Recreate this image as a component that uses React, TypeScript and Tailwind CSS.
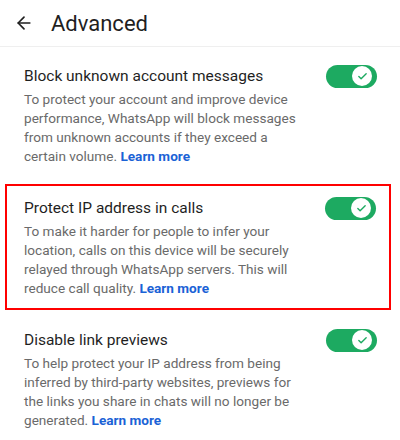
import { ArrowLeft, Check } from "lucide-react";
import type { ReactNode } from "react";

function Toggle() {
  return (
    <div className="w-[51px] h-[23px] mt-[0.5px] rounded-full bg-[#1daa61] flex items-center justify-end pr-[5px] shrink-0">
      <div className="w-[20px] h-[20px] rounded-full bg-white flex items-center justify-center">
        <Check size={11} strokeWidth={3} className="text-[#1daa61]" />
      </div>
    </div>
  );
}

function Setting({ title, children }: { title: string; children: ReactNode }) {
  return (
    <div className="flex items-start justify-between">
      <div>
        <div className="text-[15.5px] leading-[24px] text-[#1f1f1f]">{title}</div>
        <p className="text-[13.6px] leading-[19px] text-[#6a6a6a] mt-[2px]">{children}</p>
      </div>
      <Toggle />
    </div>
  );
}

function LearnMore() {
  return <span className="font-bold text-[#1a62d6]">Learn more</span>;
}

export default function App() {
  return (
    <div className="w-[400px] h-[440px] bg-white overflow-hidden font-['Roboto',sans-serif]">
      {/* Header */}
      <div className="h-[47px] flex items-center border-b border-[#efefef]">
        <ArrowLeft size={20} strokeWidth={2} className="ml-[14px] text-[#1f1f1f]" />
        <span className="ml-[17px] text-[22px] text-[#1f1f1f]">Advanced</span>
      </div>

      {/* Block unknown */}
      <div className="pt-[17px] pl-[24px] pr-[23px]">
        <Setting title="Block unknown account messages">
          To protect your account and improve device
          <br />
          performance, WhatsApp will block messages
          <br />
          from unknown accounts if they exceed a
          <br />
          certain volume. <LearnMore />
        </Setting>
      </div>

      {/* Protect IP */}
      <div className="mt-[18px] ml-[5px] mr-[9px] border-2 border-[#ff0000] pt-[10px] pb-[10px] pl-[17px] pr-[13px]">
        <Setting title="Protect IP address in calls">
          To make it harder for people to infer your
          <br />
          location, calls on this device will be securely
          <br />
          relayed through WhatsApp servers. This will
          <br />
          reduce call quality. <LearnMore />
        </Setting>
      </div>

      {/* Link previews */}
      <div className="pt-[18px] pl-[24px] pr-[23px]">
        <Setting title="Disable link previews">
          To help protect your IP address from being
          <br />
          inferred by third-party websites, previews for
          <br />
          the links you share in chats will no longer be
          <br />
          generated. <LearnMore />
        </Setting>
      </div>
    </div>
  );
}
